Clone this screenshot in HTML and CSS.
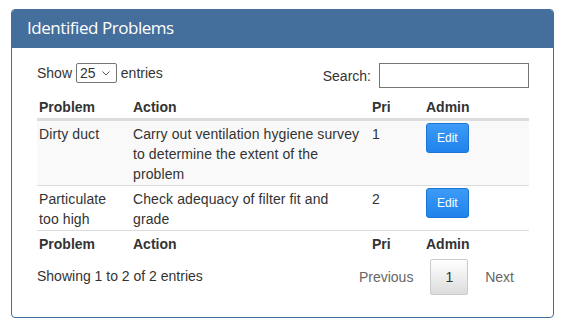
FILE: index.html
```html
<!DOCTYPE html>
<html lang="en">
<head>
    <meta charset="UTF-8">
    <meta name="viewport" content="width=device-width, initial-scale=1.0">
    <title>Identified Problems</title>
    <link rel="stylesheet" href="styles.css">
</head>
<body>
    <div class="panel">
        <div class="panel-heading">Identified Problems</div>
        <div class="panel-body">
            <div class="table-top">
                <div class="length">
                    Show
                    <span class="select">25
                        <svg width="8" height="5" viewBox="0 0 8 5"><path d="M0.5 0.5 L4 4 L7.5 0.5" fill="none" stroke="#555" stroke-width="1"/></svg>
                    </span>
                    entries
                </div>
                <div class="filter">
                    <label for="search">Search:</label>
                    <input type="search" id="search" class="search-input">
                </div>
            </div>
            <table class="problems">
                <thead>
                    <tr>
                        <th class="col-problem">Problem</th>
                        <th class="col-action">Action</th>
                        <th class="col-pri">Pri</th>
                        <th class="col-admin">Admin</th>
                    </tr>
                </thead>
                <tbody>
                    <tr class="odd">
                        <td>Dirty duct</td>
                        <td>Carry out ventilation hygiene survey to determine the extent of the problem</td>
                        <td>1</td>
                        <td><button class="btn-edit">Edit</button></td>
                    </tr>
                    <tr>
                        <td>Particulate too high</td>
                        <td>Check adequacy of filter fit and grade</td>
                        <td>2</td>
                        <td><button class="btn-edit">Edit</button></td>
                    </tr>
                </tbody>
                <tfoot>
                    <tr>
                        <th>Problem</th>
                        <th>Action</th>
                        <th>Pri</th>
                        <th>Admin</th>
                    </tr>
                </tfoot>
            </table>
            <div class="table-bottom">
                <div class="info">Showing 1 to 2 of 2 entries</div>
                <div class="paginate">
                    <span class="page-btn disabled">Previous</span>
                    <span class="page-btn current">1</span>
                    <span class="page-btn disabled">Next</span>
                </div>
            </div>
        </div>
    </div>
</body>
</html>
```

FILE: styles.css
```css
body {
    margin: 9px 15px 0 11px;
    font-family: "Liberation Sans", Arial, sans-serif;
    font-size: 14px;
    line-height: 20px;
    color: #333333;
    background-color: #ffffff;
}
.panel {
    border: 1px solid #446e9b;
    border-radius: 4px;
}
.panel-heading {
    background-color: #446e9b;
    color: #ffffff;
    font-family: "Open Sans", sans-serif;
    font-size: 17px;
    letter-spacing: -0.45px;
    line-height: 22px;
    padding: 7px 15px 9px;
    border-radius: 3px 3px 0 0;
}
.panel-body {
    padding: 15px 24px 22px 25px;
}
.table-top {
    display: flex;
    justify-content: space-between;
    align-items: flex-start;
}
.length {
    line-height: 20px;
}
.select {
    display: inline-flex;
    align-items: center;
    justify-content: space-between;
    box-sizing: border-box;
    width: 41px;
    height: 20px;
    padding: 0 6px 0 3px;
    border: 1px solid #767676;
    border-radius: 2px;
    vertical-align: top;
}
.filter {
    display: flex;
    align-items: center;
}
.filter label {
    margin-right: 8px;
}
.search-input {
    box-sizing: border-box;
    width: 150px;
    height: 25px;
    margin: 0;
    border: 1px solid #767676;
    border-radius: 0;
    font-family: inherit;
    font-size: 14px;
}
.problems {
    width: 100%;
    margin-top: 6px;
    border-collapse: collapse;
    table-layout: fixed;
}
.problems th,
.problems td {
    text-align: left;
    vertical-align: top;
    padding: 3px 4px 1px 2px;
}
.problems td {
    letter-spacing: 0.1px;
}
.problems thead th {
    border-bottom: 3px solid #dddddd;
}
.problems tbody td {
    border-top: 1px solid #dddddd;
}
.problems tfoot th {
    border-top: 1px solid #dddddd;
    padding-bottom: 2px;
}
.problems tr.odd td {
    background-color: #f9f9f9;
}
.col-problem {
    width: 88px;
}
.col-action {
    width: 233px;
}
.col-pri {
    width: 48px;
}
.btn-edit {
    display: block;
    margin-top: -1px;
    padding: 5px 10px;
    font-family: "Liberation Sans", Arial, sans-serif;
    font-size: 12px;
    line-height: 18px;
    color: #ffffff;
    background: linear-gradient(to bottom, #3d9bf6, #1f83ec);
    border: 1px solid #1c76d8;
    border-radius: 3px;
}
.table-bottom {
    display: flex;
    justify-content: space-between;
    align-items: flex-start;
}
.info {
    padding-top: 10px;
}
.paginate {
    display: flex;
    padding-top: 3px;
}
.page-btn {
    padding: 7px 14px;
    margin-left: 2px;
    border: 1px solid transparent;
    border-radius: 2px;
}
.page-btn.disabled {
    color: #666666;
}
.page-btn.current {
    color: #333333;
    border-color: #cacaca;
    background: linear-gradient(to bottom, #ffffff, #dcdcdc);
}
```
